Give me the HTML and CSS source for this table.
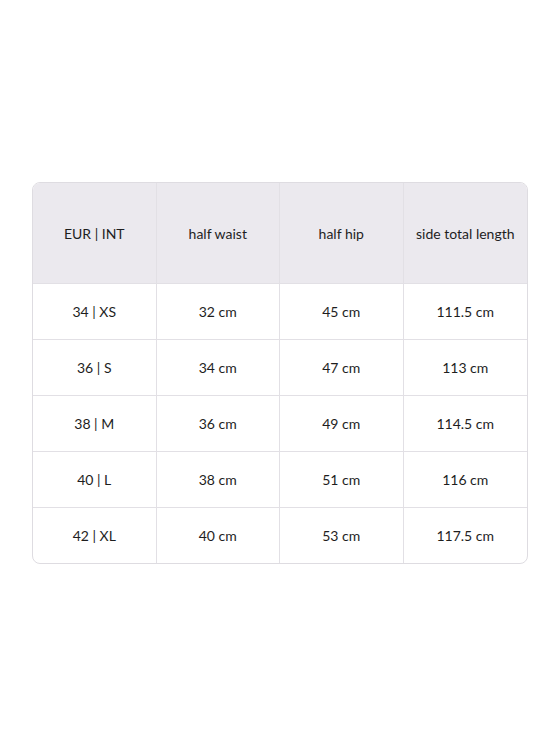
FILE: index.html
```html
<!DOCTYPE html>
<html lang="en">
<head>
<meta charset="utf-8">
<title>Size chart</title>
<link rel="stylesheet" href="styles.css">
</head>
<body>
<div class="page">
  <div class="chart">
    <div class="cell head">EUR | INT</div>
    <div class="cell head">half waist</div>
    <div class="cell head">half hip</div>
    <div class="cell head last-col">side total length</div>

    <div class="cell">34 | XS</div>
    <div class="cell">32 cm</div>
    <div class="cell">45 cm</div>
    <div class="cell last-col">111.5 cm</div>

    <div class="cell">36 | S</div>
    <div class="cell">34 cm</div>
    <div class="cell">47 cm</div>
    <div class="cell last-col">113 cm</div>

    <div class="cell">38 | M</div>
    <div class="cell">36 cm</div>
    <div class="cell">49 cm</div>
    <div class="cell last-col">114.5 cm</div>

    <div class="cell">40 | L</div>
    <div class="cell">38 cm</div>
    <div class="cell">51 cm</div>
    <div class="cell last-col">116 cm</div>

    <div class="cell last-row">42 | XL</div>
    <div class="cell last-row">40 cm</div>
    <div class="cell last-row">53 cm</div>
    <div class="cell last-row last-col">117.5 cm</div>
  </div>
</div>
</body>
</html>
```
FILE: styles.css
```css
html, body {
  margin: 0;
  padding: 0;
  background: #ffffff;
}

body {
  font-family: Lato, "Open Sans", sans-serif;
  font-size: 14px;
  color: #1e1e1e;
}

.page {
  padding: 182px 32px 0 32px;
}

.chart {
  display: grid;
  grid-template-columns: repeat(4, 1fr);
  border: 1px solid #dedce1;
  border-radius: 8px;
  overflow: hidden;
  width: 494px;
}

.cell {
  display: flex;
  align-items: center;
  justify-content: center;
  height: 55px;
  border-right: 1px solid #e2e0e5;
  border-bottom: 1px solid #e2e0e5;
  text-align: center;
}

.head {
  height: 100px;
  background: #ebe9ee;
}

.last-col {
  border-right: none;
}

.last-row {
  border-bottom: none;
}
```
